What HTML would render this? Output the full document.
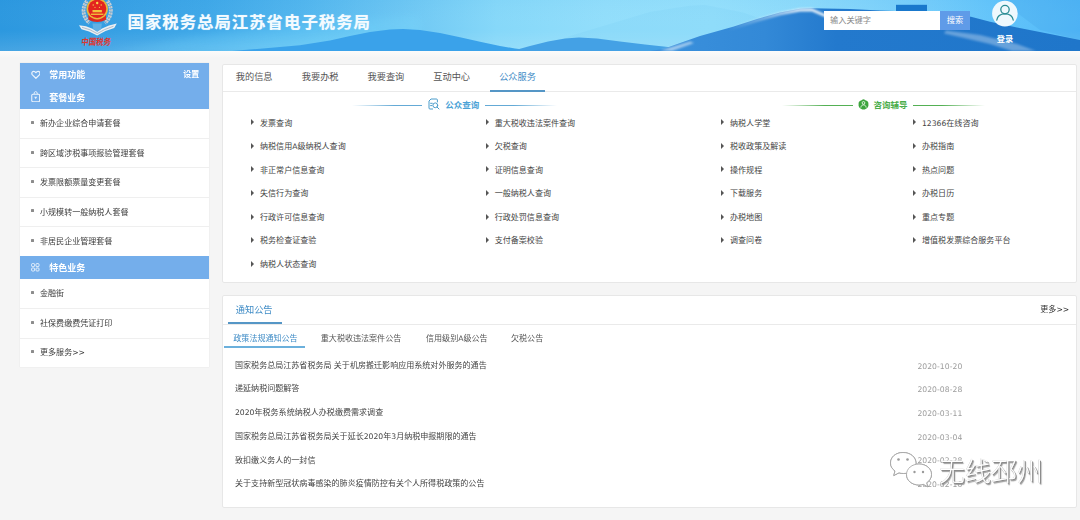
<!DOCTYPE html><html lang="zh-CN"><head><meta charset="utf-8"><title>国家税务总局江苏省电子税务局</title><style>
*{margin:0;padding:0;box-sizing:border-box}
html,body{width:1080px;height:520px;overflow:hidden;background:#f5f5f5}
body{position:relative;font-family:"Liberation Sans","Noto Sans CJK SC",sans-serif;color:#333;font-size:8px;line-height:1}
#soft{position:absolute;left:0;top:0;width:1080px;height:520px;filter:blur(.4px)}
.abs{position:absolute;white-space:nowrap}
.t{position:absolute;white-space:nowrap;transform:translateY(-50%);line-height:1}
.tc{position:absolute;white-space:nowrap;transform:translate(-50%,-50%);line-height:1}
#hdr{position:absolute;left:0;top:0;width:1080px;height:51px;overflow:hidden}
#title{left:127.5px;top:21.9px;font-size:16.4px;font-weight:bold;color:#f4fbff;letter-spacing:1px;text-shadow:0 0 1px rgba(255,255,255,.5)}
.panel{position:absolute;background:#fff;border:1px solid #e7e7e7;border-radius:2px}
.bh{position:absolute;left:0;width:189px;background:#74aeeb}
.side .t{font-size:8.05px;color:#3c3c3c}
.side .w{color:#fff;font-weight:bold;font-size:9px}
.sep{position:absolute;left:0;width:189px;height:1px;background:#efefef}
.bul{position:absolute;width:3px;height:3px;background:#8c8c8c;border-radius:.5px}
.tab{font-size:9.2px;color:#555}
.act{color:#3f8cc6}
.tri{position:absolute;width:0;height:0;border-left:3px solid #555;border-top:3.1px solid transparent;border-bottom:3.1px solid transparent;transform:translateY(-50%)}
.it{font-size:8.05px;color:#444}
.n{font-family:'DejaVu Sans',sans-serif;font-size:7.65px}
.date{font-size:7.65px;color:#9c9c9c;font-family:'DejaVu Sans',sans-serif;letter-spacing:.05px}
</style></head><body><div id="soft">
<div id="hdr">
<svg width="1080" height="51" viewBox="0 0 1080 51" style="position:absolute;left:0;top:0">
<defs>
<linearGradient id="sky" x1="0" x2="1" y1="0" y2="0">
<stop offset="0" stop-color="#2c98df"/>
<stop offset="0.09" stop-color="#359ee3"/>
<stop offset="0.19" stop-color="#3fa8e8"/>
<stop offset="0.28" stop-color="#52b6ee"/>
<stop offset="0.37" stop-color="#6cc6f3"/>
<stop offset="0.46" stop-color="#86d8f9"/>
<stop offset="0.56" stop-color="#92defb"/>
<stop offset="0.66" stop-color="#95e0fc"/>
<stop offset="0.75" stop-color="#8cdafb"/>
<stop offset="0.84" stop-color="#79cffb"/>
<stop offset="0.93" stop-color="#60c3fa"/>
<stop offset="1" stop-color="#52b9f8"/>
</linearGradient>
<linearGradient id="skyv" x1="0" x2="0" y1="0" y2="1">
<stop offset="0" stop-color="#1c7fd0" stop-opacity=".03"/>
<stop offset="0.6" stop-color="#ffffff" stop-opacity="0"/>
<stop offset="1" stop-color="#ffffff" stop-opacity=".12"/>
</linearGradient>
<linearGradient id="m3" gradientUnits="userSpaceOnUse" x1="660" y1="0" x2="1080" y2="0">
<stop offset="0" stop-color="#3a90dc"/>
<stop offset="0.25" stop-color="#3389d7"/>
<stop offset="0.42" stop-color="#2379cd"/>
<stop offset="1" stop-color="#1f76ca"/>
</linearGradient>
<filter id="bl" x="-10%" y="-50%" width="120%" height="200%"><feGaussianBlur stdDeviation=".9"/></filter>
<filter id="bl2" x="-20%" y="-50%" width="140%" height="200%"><feGaussianBlur stdDeviation="4"/></filter>
<filter id="bl3" x="-10%" y="-50%" width="120%" height="200%"><feGaussianBlur stdDeviation="1.3"/></filter>
<linearGradient id="hl" gradientUnits="userSpaceOnUse" x1="728" y1="0" x2="800" y2="0"><stop offset="0" stop-color="#e6f1fa" stop-opacity="0"/><stop offset=".55" stop-color="#e6f1fa" stop-opacity=".45"/><stop offset="1" stop-color="#eef6fc" stop-opacity=".92"/></linearGradient>
</defs>
<rect width="1080" height="51" fill="url(#sky)"/>
<rect width="1080" height="51" fill="url(#skyv)"/>
<path d="M105 53 L200 36 L300 24 L420 16 L420 53 Z" fill="#7fe0ff" opacity=".22" filter="url(#bl2)"/>
<path d="M150 55 L300 36 L380 30 L380 55 Z" fill="#7fe0ff" opacity=".16" filter="url(#bl2)"/>
<!-- far pale mountain -->
<path d="M540 51 L570 36 L610 24 L650 12 L688 6 L705 5 L743 12.5 L775 24 L800 40 L800 51 Z" fill="#6fc4f3" opacity=".16"/>
<path d="M1000 0 L1080 0 L1080 40 L1040 30 Z" fill="#3f9fe8" opacity=".25"/>
<!-- hill 1 -->
<path d="M232 51 L260 48.7 L300 45.3 L330 40.5 L350 36 L370 32 L390 29.6 L403 29 L420 30 L440 33 L460 37.3 L480 41.8 L500 46 L515 48.5 L535 51 Z" fill="#3aa2ea"/>
<!-- hill 2 -->
<path d="M512 51 L530 46 L548 41.5 L565 38.5 L579 37.5 L597 38.5 L620 41.5 L645 44.5 L668 47 L692 51 Z" fill="#44a1e5"/>
<!-- big mountain -->
<path d="M650 51 L663 49 L700 36 L733 26.7 L757 19 L780 12.5 L800 8.7 L812 8.2 L850 9 L880 10.5 L910 11.5 L940 13 L971 16.7 L990 21.7 L1017 27.5 L1050 34 L1080 40 L1080 51 Z" fill="url(#m3)"/>
<!-- ridge highlight -->
<path d="M728 29.5 L757 20.3 L780 13.8 L800 10 L812 9.8 L827 16.5" stroke="url(#hl)" stroke-width="3" fill="none" stroke-linejoin="round" filter="url(#bl)"/>
<path d="M660 50.5 L690 41.5 L694 43 L672 51 Z" fill="#e6f1fa" opacity=".6" filter="url(#bl)"/>
<!-- wall streak -->
<path d="M946 30.5 L980 35 L1017 44 L1036 51 L1012 51 L990 44 L962 37.5 L944 33.5 Z" fill="#c9def3" opacity=".42" filter="url(#bl3)"/>
<!-- building -->
<rect x="896" y="4.8" width="31" height="7" fill="#1978cc"/>
</svg>

<svg width="46" height="37" viewBox="0 0 46 37" style="position:absolute;left:74px;top:0">
<g fill="none" stroke="#c3ced8" stroke-width="3.8" stroke-dasharray="2.3 .7">
<path d="M13 1 C8 7 8 16.500 15.500 23"/><path d="M33.400 1 C38.400 7 38.400 16.500 30.900 23"/>
</g>
<g fill="none" stroke="#8596a6" stroke-width="1" stroke-dasharray="1.200 1.800" opacity=".8">
<path d="M13 1 C8 7 8 16.500 15.500 23"/><path d="M33.400 1 C38.400 7 38.400 16.500 30.900 23"/>
</g>
<path d="M5 25.200 L12 26.300 L18.500 28.800 L23.200 31.500 L28 28.600 L35 25.600 L42.800 23.600 L40.200 28 L31.500 31 L23.200 35.600 L15 31.600 L7.500 29.200 Z" fill="#eaeff3"/>
<path d="M8 27.300 L16 29.800 L23.200 33.600 L30.500 29.600 L39.500 26.200" fill="none" stroke="#a9b7c4" stroke-width=".9"/>
<path d="M18.500 23.500 L27.900 23.500 L27.200 29 L23.200 31.800 L19.200 29 Z" fill="#62b0e4"/>
<path d="M14.400 14 L32 14 L32 19.800 Q23.200 24.400 14.400 19.800 Z" fill="#dc2a22"/>
<circle cx="23.200" cy="8.800" r="10.700" fill="#e8b83c"/>
<circle cx="23.200" cy="8.800" r="9.100" fill="#e3241f"/>
<rect x="18.500" y="10" width="9.400" height="2.300" fill="#f2c63c"/>
<rect x="17" y="13.600" width="12.400" height="1.300" fill="#f2c63c"/>
<circle cx="23.200" cy="3" r="1.200" fill="#f8d84e"/>
<circle cx="19.200" cy="5" r=".7" fill="#f8d84e"/><circle cx="27.200" cy="5" r=".7" fill="#f8d84e"/>
<circle cx="21" cy="7.300" r=".6" fill="#f8d84e"/><circle cx="25.400" cy="7.300" r=".6" fill="#f8d84e"/>
</svg>
<div class="abs" style="left:82.3px;top:37px;width:31px;font-size:7.4px;line-height:9px;color:#e2352c;font-weight:600;transform-origin:0 0;transform:scaleY(1.2) skewX(-8deg);font-family:'Noto Serif CJK SC',"Liberation Sans","Noto Sans CJK SC",sans-serif;letter-spacing:0">中国税务</div>
<div class="t" id="title">国家税务总局江苏省电子税务局</div>
<div class="abs" style="left:824px;top:11px;width:116px;height:19px;background:#fff"></div>
<div class="t" style="left:830px;top:20.5px;font-size:8.2px;color:#8a8a8a">输入关键字</div>
<div class="abs" style="left:940px;top:11px;width:30px;height:19px;background:#5f9be8"></div>
<div class="tc" style="left:955px;top:20.5px;font-size:8.2px;color:#fff">搜索</div>
<svg width="28" height="28" viewBox="0 0 28 28" style="position:absolute;left:991.2px;top:-0.8px">
<circle cx="13.9" cy="14.6" r="12.8" fill="#eef8fd"/>
<circle cx="14" cy="10.6" r="4.2" fill="none" stroke="#2a8c94" stroke-width="1.3"/>
<path d="M5.8 21 C6.5 16.3 10 14.8 14 14.8 C18 14.8 21.5 16.3 22.2 21" fill="none" stroke="#2a8c94" stroke-width="1.3" stroke-linecap="round"/>
</svg>
<div class="tc" style="left:1005px;top:39.7px;font-size:8.2px;color:#fff;font-weight:bold">登录</div>
</div>
<div class="abs" style="left:0;top:51px;width:1080px;height:7px;background:linear-gradient(#fcfbfa,#f5f5f5)"></div>
<div class="side" style="position:absolute;left:20px;top:63px;width:189px;height:304px;background:#fff;box-shadow:0 0 1px #ddd">
<div class="bh" style="top:0;height:45.5px"></div>
<svg width="9.8" height="9.4" viewBox="0 0 11 10" style="position:absolute;left:10.5px;top:7px"><path d="M5.5 9 L1.600 5.200 C0.400 3.900 0.800 1.200 3 1.200 C4.300 1.200 5.100 2 5.500 2.800 C5.900 2 6.700 1.200 8 1.200 C10.200 1.200 10.600 3.900 9.400 5.200 Z" fill="none" stroke="#eaf3fd" stroke-width="1.35" stroke-linejoin="round"/></svg>
<div class="t w" style="left:29.3px;top:12.2px">常用功能</div>
<div class="t" style="left:163.3px;top:12.3px;color:#fff;font-size:8px;font-weight:bold">设置</div>
<svg width="9.4" height="11.3" viewBox="0 -2 10 12" style="position:absolute;left:10.8px;top:27.8px"><rect x=".8" y="1.400" width="8.400" height="8" rx="1.300" fill="none" stroke="#eaf3fd" stroke-width="1.150"/><path d="M3.200 1.400 Q3.200 -1.400 5 -1.400 Q6.800 -1.400 6.800 1.400" fill="none" stroke="#eaf3fd" stroke-width="1"/><path d="M3.400 4.200 L6.600 4.200 L5 6.800 Z" fill="#eaf3fd"/></svg>
<div class="t w" style="left:29.3px;top:34.7px">套餐业务</div>
<div class="bul" style="left:11.3px;top:58px"></div>
<div class="t" style="left:20px;top:61.0px">新办企业综合申请套餐</div>
<div class="sep" style="top:74.5px"></div>
<div class="bul" style="left:11.3px;top:88px"></div>
<div class="t" style="left:20px;top:90.5px">跨区域涉税事项报验管理套餐</div>
<div class="sep" style="top:104.0px"></div>
<div class="bul" style="left:11.3px;top:117px"></div>
<div class="t" style="left:20px;top:120.0px">发票限额票量变更套餐</div>
<div class="sep" style="top:133.5px"></div>
<div class="bul" style="left:11.3px;top:146px"></div>
<div class="t" style="left:20px;top:149.5px">小规模转一般纳税人套餐</div>
<div class="sep" style="top:163.0px"></div>
<div class="bul" style="left:11.3px;top:176px"></div>
<div class="t" style="left:20px;top:179.0px">非居民企业管理套餐</div>
<div class="bh" style="top:193px;height:23px"></div>
<svg width="9" height="9" viewBox="0 0 9 9" style="position:absolute;left:10.8px;top:200px"><g fill="none" stroke="#fff" stroke-width=".8"><rect x=".6" y=".6" width="3" height="3" rx=".8"/><rect x="5" y=".6" width="3" height="3" rx=".8"/><rect x=".6" y="5" width="3" height="3" rx=".8"/><rect x="5" y="5" width="3" height="3" rx=".8"/></g></svg>
<div class="t w" style="left:29.3px;top:204.5px">特色业务</div>
<div class="bul" style="left:11.3px;top:228px"></div>
<div class="t" style="left:20px;top:231.2px">金融街</div>
<div class="sep" style="top:245.0px"></div>
<div class="bul" style="left:11.3px;top:258px"></div>
<div class="t" style="left:20px;top:260.7px">社保费缴费凭证打印</div>
<div class="sep" style="top:274.5px"></div>
<div class="bul" style="left:11.3px;top:287px"></div>
<div class="t" style="left:20px;top:290.2px">更多服务<span class="n">&gt;&gt;</span></div>
</div>
<div class="panel" style="left:221.5px;top:63.5px;width:855px;height:219px"></div>
<div class="tc tab" style="left:254.2px;top:77.7px">我的信息</div>
<div class="tc tab" style="left:320.2px;top:77.7px">我要办税</div>
<div class="tc tab" style="left:385.9px;top:77.7px">我要查询</div>
<div class="tc tab" style="left:451.7px;top:77.7px">互动中心</div>
<div class="tc tab act" style="left:517.5px;top:77.7px">公众服务</div>
<div class="abs" style="left:222.5px;top:90.7px;width:853px;height:1px;background:#eaeaea"></div>
<div class="abs" style="left:490px;top:90px;width:55px;height:2px;background:#5596c6"></div>
<div class="abs" style="left:352px;top:104.5px;width:70.4px;height:1px;background:linear-gradient(90deg,rgba(100,170,214,0),#64aad6 60%)"></div>
<div class="abs" style="left:485px;top:104.5px;width:72px;height:1px;background:linear-gradient(270deg,rgba(100,170,214,0),#64aad6 60%)"></div>
<svg width="12" height="12" viewBox="0 0 12 12" style="position:absolute;left:428.3px;top:98.3px"><g fill="none" stroke="#4a9ccb" stroke-width="1" stroke-linecap="round" stroke-linejoin="round"><path d="M9.4 4 L9.4 2 Q9.4 1 8.4 1 L3 1 L1 3 L1 10 Q1 11 2 11 L4.6 11"/><path d="M2.6 5.3 L4.3 5.3 M2.6 7.6 L3.8 7.6"/><circle cx="7.3" cy="7.3" r="2.4"/><path d="M9.1 9.1 L11 11"/></g></svg>
<div class="t" style="left:445.3px;top:105px;font-size:8.5px;font-weight:bold;color:#4aa2d6">公众查询</div>
<div class="abs" style="left:782px;top:104.7px;width:71px;height:1px;background:linear-gradient(90deg,rgba(84,176,84,0),#54b054 60%)"></div>
<div class="abs" style="left:913px;top:104.7px;width:72px;height:1px;background:linear-gradient(270deg,rgba(84,176,84,0),#54b054 60%)"></div>
<svg width="11" height="11" viewBox="0 0 11 11" style="position:absolute;left:857.7px;top:98.8px"><path d="M5.5 .3 C6.6 .3 7 1.2 8 1.5 C9.6 1.9 10.7 3 10.4 5 C10.9 7.5 9.4 9.2 7.6 10 C6.3 10.8 4.7 10.8 3.4 10 C1.6 9.2 .1 7.5 .6 5 C.3 3 1.4 1.9 3 1.5 C4 1.2 4.4 .3 5.5 .3 Z" fill="#3da53d"/><circle cx="5.5" cy="3.9" r="1.35" fill="none" stroke="#fff" stroke-width=".8"/><path d="M2.9 8.2 C3.2 6.4 4.3 5.9 5.5 5.9 C6.7 5.9 7.8 6.4 8.1 8.2" fill="none" stroke="#fff" stroke-width=".8" stroke-linecap="round"/></svg>
<div class="t" style="left:873.6px;top:105px;font-size:8.5px;font-weight:bold;color:#4aad4a">咨询辅导</div>
<div class="tri" style="left:250.9px;top:122.2px"></div>
<div class="t it" style="left:260.0px;top:123.5px">发票查询</div>
<div class="tri" style="left:250.9px;top:145.8px"></div>
<div class="t it" style="left:260.0px;top:147.1px">纳税信用<span class="n">A</span>级纳税人查询</div>
<div class="tri" style="left:250.9px;top:169.4px"></div>
<div class="t it" style="left:260.0px;top:170.7px">非正常户信息查询</div>
<div class="tri" style="left:250.9px;top:193.0px"></div>
<div class="t it" style="left:260.0px;top:194.2px">失信行为查询</div>
<div class="tri" style="left:250.9px;top:216.6px"></div>
<div class="t it" style="left:260.0px;top:217.9px">行政许可信息查询</div>
<div class="tri" style="left:250.9px;top:240.2px"></div>
<div class="t it" style="left:260.0px;top:241.4px">税务检查证查验</div>
<div class="tri" style="left:250.9px;top:263.8px"></div>
<div class="t it" style="left:260.0px;top:265.1px">纳税人状态查询</div>
<div class="tri" style="left:485.5px;top:122.2px"></div>
<div class="t it" style="left:494.7px;top:123.5px">重大税收违法案件查询</div>
<div class="tri" style="left:485.5px;top:145.8px"></div>
<div class="t it" style="left:494.7px;top:147.1px">欠税查询</div>
<div class="tri" style="left:485.5px;top:169.4px"></div>
<div class="t it" style="left:494.7px;top:170.7px">证明信息查询</div>
<div class="tri" style="left:485.5px;top:193.0px"></div>
<div class="t it" style="left:494.7px;top:194.2px">一般纳税人查询</div>
<div class="tri" style="left:485.5px;top:216.6px"></div>
<div class="t it" style="left:494.7px;top:217.9px">行政处罚信息查询</div>
<div class="tri" style="left:485.5px;top:240.2px"></div>
<div class="t it" style="left:494.7px;top:241.4px">支付备案校验</div>
<div class="tri" style="left:720.9px;top:122.2px"></div>
<div class="t it" style="left:730.0px;top:123.5px">纳税人学堂</div>
<div class="tri" style="left:720.9px;top:145.8px"></div>
<div class="t it" style="left:730.0px;top:147.1px">税收政策及解读</div>
<div class="tri" style="left:720.9px;top:169.4px"></div>
<div class="t it" style="left:730.0px;top:170.7px">操作规程</div>
<div class="tri" style="left:720.9px;top:193.0px"></div>
<div class="t it" style="left:730.0px;top:194.2px">下载服务</div>
<div class="tri" style="left:720.9px;top:216.6px"></div>
<div class="t it" style="left:730.0px;top:217.9px">办税地图</div>
<div class="tri" style="left:720.9px;top:240.2px"></div>
<div class="t it" style="left:730.0px;top:241.4px">调查问卷</div>
<div class="tri" style="left:912.9px;top:122.2px"></div>
<div class="t it" style="left:922.0px;top:123.5px"><span class="n">12366</span>在线咨询</div>
<div class="tri" style="left:912.9px;top:145.8px"></div>
<div class="t it" style="left:922.0px;top:147.1px">办税指南</div>
<div class="tri" style="left:912.9px;top:169.4px"></div>
<div class="t it" style="left:922.0px;top:170.7px">热点问题</div>
<div class="tri" style="left:912.9px;top:193.0px"></div>
<div class="t it" style="left:922.0px;top:194.2px">办税日历</div>
<div class="tri" style="left:912.9px;top:216.6px"></div>
<div class="t it" style="left:922.0px;top:217.9px">重点专题</div>
<div class="tri" style="left:912.9px;top:240.2px"></div>
<div class="t it" style="left:922.0px;top:241.4px">增值税发票综合服务平台</div>
<div class="panel" style="left:221.5px;top:295px;width:855px;height:212.5px"></div>
<div class="tc tab act" style="left:254.2px;top:311.1px">通知公告</div>
<div class="t it" style="left:1040.3px;top:310px;color:#333">更多<span class="n">&gt;&gt;</span></div>
<div class="abs" style="left:222.5px;top:323.7px;width:853px;height:1px;background:#eaeaea"></div>
<div class="abs" style="left:227.5px;top:322.4px;width:54px;height:2px;background:#5596c6"></div>
<div class="t it" style="left:233.3px;top:339px;color:#3f8cc6">政策法规通知公告</div>
<div class="t it" style="left:320.8px;top:339px;color:#555">重大税收违法案件公告</div>
<div class="t it" style="left:426.0px;top:339px;color:#555">信用级别<span class="n">A</span>级公告</div>
<div class="t it" style="left:511.0px;top:339px;color:#555">欠税公告</div>
<div class="abs" style="left:224.2px;top:346px;width:80.8px;height:2px;background:#6bb0dc"></div>
<div class="t it" style="left:235px;top:365.7px">国家税务总局江苏省税务局 关于机房搬迁影响应用系统对外服务的通告</div>
<div class="t date" style="left:917.4px;top:366.5px">2020-10-20</div>
<div class="t it" style="left:235px;top:389.4px">递延纳税问题解答</div>
<div class="t date" style="left:917.4px;top:390.2px">2020-08-28</div>
<div class="t it" style="left:235px;top:413.1px"><span class="n">2020</span>年税务系统纳税人办税缴费需求调查</div>
<div class="t date" style="left:917.4px;top:413.9px">2020-03-11</div>
<div class="t it" style="left:235px;top:436.8px">国家税务总局江苏省税务局关于延长<span class="n">2020</span>年<span class="n">3</span>月纳税申报期限的通告</div>
<div class="t date" style="left:917.4px;top:437.6px">2020-03-04</div>
<div class="t it" style="left:235px;top:460.5px">致扣缴义务人的一封信</div>
<div class="t date" style="left:917.4px;top:461.3px">2020-02-28</div>
<div class="t it" style="left:235px;top:484.2px">关于支持新型冠状病毒感染的肺炎疫情防控有关个人所得税政策的公告</div>
<div class="t date" style="left:917.4px;top:485.0px">2020-02-10</div>
<svg width="46" height="38" viewBox="0 0 46 38" style="position:absolute;left:889px;top:451px">
<g stroke="#a8a8a8" stroke-width=".9" fill="#fff" style="filter:drop-shadow(.8px .9px 0 #8a8a8a)">
<path d="M14 1.5 C6.5 1.5 1.5 6.3 1.5 12 C1.5 15.3 3.2 18 6 20 L4.8 24.5 L10 21.8 C11.5 22.3 13 22.5 14.5 22.5 C22 22.5 27 17.8 27 12 C27 6.3 21.5 1.5 14 1.5 Z"/>
<path d="M30 13 C23 13 17.5 17.5 17.5 23.5 C17.5 29.5 23 34 30 34 C31.5 34 33 33.7 34.3 33.3 L38.8 35.8 L37.6 31.8 C40.5 29.8 42.5 27 42.5 23.5 C42.5 17.5 37 13 30 13 Z"/>
</g>
<g fill="#9a9a9a"><circle cx="9.5" cy="8.5" r="1.3"/><circle cx="18.5" cy="8.5" r="1.3"/><circle cx="25.5" cy="21" r="1.2"/><circle cx="34" cy="21" r="1.2"/></g>
</svg>
<div class="abs" style="left:939px;top:458px;font-size:26px;line-height:28px;color:#fff;font-weight:300;text-shadow:1px 1px 0 #8c8c8c,1.5px 1.5px 1px #999,-0.3px -0.3px 0 #bbb">无线邳州</div>
</div></body></html>
